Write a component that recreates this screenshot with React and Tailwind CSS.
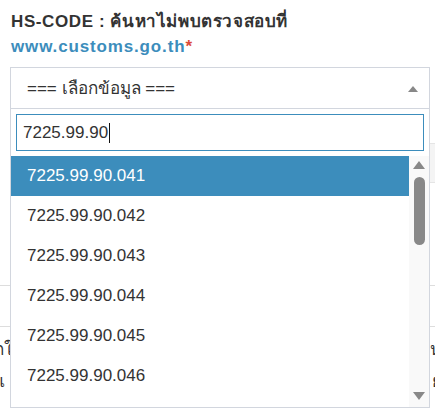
import React from "react";

const options = [
  "7225.99.90.041",
  "7225.99.90.042",
  "7225.99.90.043",
  "7225.99.90.044",
  "7225.99.90.045",
  "7225.99.90.046",
  "7225.99.90.047",
];

export default function App() {
  return (
    <div
      className="relative w-[435px] h-[409px] overflow-hidden bg-white text-[#333]"
      style={{ fontFamily: '"Liberation Sans", Arial, "Noto Sans", sans-serif' }}
    >
      <div className="pl-[11px] pt-[9px]">
        <div className="text-[17px] leading-[25px] font-bold text-[#333] tracking-[0.6px]">
          HS-CODE : ค้นหาไม่พบตรวจสอบที่
        </div>
        <div className="text-[17px] leading-[25px] font-bold text-[#3c8dbc] tracking-[0.85px]">
          www.customs.go.th<span className="text-[#dd4b39]">*</span>
        </div>
      </div>

      <div className="mt-[8px] ml-[10px] w-[420px] h-[43px] border border-[#d2d6de] flex items-center justify-between pl-[16px] pr-[10px]">
        <span className="text-[17px]">=== เลือกข้อมูล ===</span>
        <svg width="10" height="6" viewBox="0 0 10 6" className="mr-[1px]">
          <path d="M0 6 L5 0 L10 6 Z" fill="#888" />
        </svg>
      </div>

      {/* background content behind dropdown */}
      <div className="mt-[33px] ml-[20px] h-[40px] bg-[#f4f4f4] border-y border-[#e5e5e5]" />
      <div className="mt-[102px] border-t border-[#ddd]" />
      <div className="mt-[40px] border-t border-[#ddd]" />
      <div className="mt-[6px] flex justify-between text-[17px] leading-[34px] ml-[-6px] mr-[-7px]">
        <span>กใ</span>
        <span>น</span>
      </div>
      <div className="flex justify-between text-[17px] leading-[30px] ml-[-6px] mr-[-7px]">
        <span>แ</span>
        <span>ย</span>
      </div>

      {/* dropdown overlay */}
      <div className="absolute left-[10px] top-[108px] w-[420px] h-[300px] border border-[#d2d6de] bg-white flex flex-col">
        <div className="p-[5px]">
          <div className="h-[37px] border border-[#3c8dbc] flex items-center pl-[6px] text-[17px]">
            <span>7225.99.90</span>
            <span className="inline-block w-[1px] h-[20px] bg-[#111] ml-[1px]" />
          </div>
        </div>
        <div className="flex flex-1 overflow-hidden">
          <div className="w-[398px] overflow-hidden">
            {options.map((o, i) => (
              <div
                key={o}
                className={
                  "h-[40px] flex items-center pl-[16px] text-[17px] " +
                  (i === 0 ? "bg-[#3c8dbc] text-white" : "text-[#333]")
                }
              >
                {o}
              </div>
            ))}
          </div>
          <div className="flex-1 bg-[#f9f9f9] flex flex-col items-center">
            <svg width="12" height="8" viewBox="0 0 12 8" className="mt-[5px]">
              <path d="M0 8 L6 0 L12 8 Z" fill="#888" />
            </svg>
            <div className="mt-[8px] w-[11px] h-[68px] rounded-full bg-[#888]" />
            <div className="flex-1" />
            <svg width="12" height="8" viewBox="0 0 12 8" className="mb-[7px]">
              <path d="M0 0 L6 8 L12 0 Z" fill="#888" />
            </svg>
          </div>
        </div>
      </div>
    </div>
  );
}
